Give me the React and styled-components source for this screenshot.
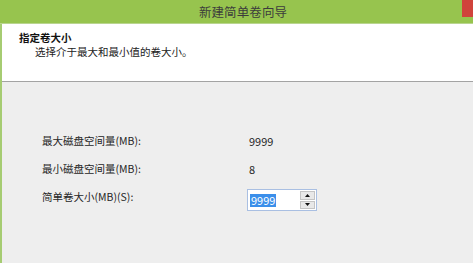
import React from "react";
import styled, { createGlobalStyle } from "styled-components";

const GlobalStyle = createGlobalStyle`
  html, body {
    margin: 0;
    padding: 0;
    background: #eeeeee;
    overflow: hidden;
  }
  body {
    font-family: "Noto Sans CJK SC", "Liberation Sans", sans-serif;
    -webkit-font-smoothing: antialiased;
  }
`;

const StyledWindow = styled.div`
  width: 473px;
  height: 263px;
  display: flex;
  flex-direction: column;
  overflow: hidden;
  background: #eeeeee;
`;

const TitleBar = styled.div`
  height: 24px;
  flex: none;
  display: flex;
  align-items: flex-start;
  background: #97c44e;
  border-bottom: 1px solid #b9d58f;
  box-sizing: border-box;
`;

const Title = styled.div`
  flex: 1;
  align-self: center;
  text-align: center;
  padding-left: 24px;
  font-size: 12.5px;
  color: #3c3c3c;
  letter-spacing: 0.1px;
`;

const CloseButton = styled.div`
  flex: none;
  width: 11px;
  height: 17px;
  background: #d0433b;
`;

const Frame = styled.div`
  flex: 1;
  display: flex;
  flex-direction: column;
  border-left: 2px solid #a6cc72;
`;

const Header = styled.div`
  height: 58px;
  flex: none;
  box-sizing: border-box;
  background: #ffffff;
  border-bottom: 1px solid #a3a3a3;
  padding: 7px 0 0 17px;

  h3 {
    margin: 0;
    font-size: 10.5px;
    line-height: 13px;
    font-weight: bold;
    color: #111;
  }
  p {
    margin: 1px 0 0;
    padding-left: 16px;
    font-size: 10.5px;
    line-height: 13px;
    color: #222;
  }
`;

const Body = styled.div`
  flex: 1;
  padding: 45px 0 0 40px;
`;

const Form = styled.div`
  display: grid;
  grid-template-columns: 205px auto;
  grid-auto-rows: 28px;
  align-items: start;
  font-size: 10.5px;
  color: #262626;
`;

const Label = styled.div`
  line-height: 28px;
`;

const Value = styled.div`
  line-height: 28px;
  padding-left: 2px;
  font-size: 11px;
`;

const SpinBox = styled.div`
  margin-top: 6px;
  width: 70px;
  height: 22px;
  box-sizing: border-box;
  display: flex;
  align-items: stretch;
  background: #fff;
  border: 1px solid #a9bfe2;

  .text {
    flex: 1;
    display: flex;
    align-items: center;
    padding-left: 2px;
    font-size: 11px;
  }
  .sel {
    background: #3b8fea;
    color: #fff;
    line-height: 13px;
    padding: 0 1px;
  }
`;

const Spinner = styled.div`
  width: 15px;
  display: flex;
  flex-direction: column;
  gap: 1px;
  padding: 1px 1px 1px 0;
`;

const SpinButton = styled.div`
  flex: 1;
  display: flex;
  align-items: center;
  justify-content: center;
  background: #e8e8e8;
  border: 1px solid #c4c4c4;

  svg {
    display: block;
  }
`;

function Arrow({ up }) {
  return (
    <svg width="5" height="3" viewBox="0 0 5 3">
      <polygon points={up ? "0,3 5,3 2.5,0" : "0,0 5,0 2.5,3"} fill="#111" />
    </svg>
  );
}

export default function App() {
  return (
    <StyledWindow>
      <GlobalStyle />
      <TitleBar>
        <Title>新建简单卷向导</Title>
        <CloseButton />
      </TitleBar>
      <Frame>
        <Header>
          <h3>指定卷大小</h3>
          <p>选择介于最大和最小值的卷大小。</p>
        </Header>
        <Body>
          <Form>
            <Label>最大磁盘空间量(MB):</Label>
            <Value>9999</Value>
            <Label>最小磁盘空间量(MB):</Label>
            <Value>8</Value>
            <Label>简单卷大小(MB)(S):</Label>
            <SpinBox>
              <div className="text">
                <span className="sel">9999</span>
              </div>
              <Spinner>
                <SpinButton>
                  <Arrow up />
                </SpinButton>
                <SpinButton>
                  <Arrow />
                </SpinButton>
              </Spinner>
            </SpinBox>
          </Form>
        </Body>
      </Frame>
    </StyledWindow>
  );
}
